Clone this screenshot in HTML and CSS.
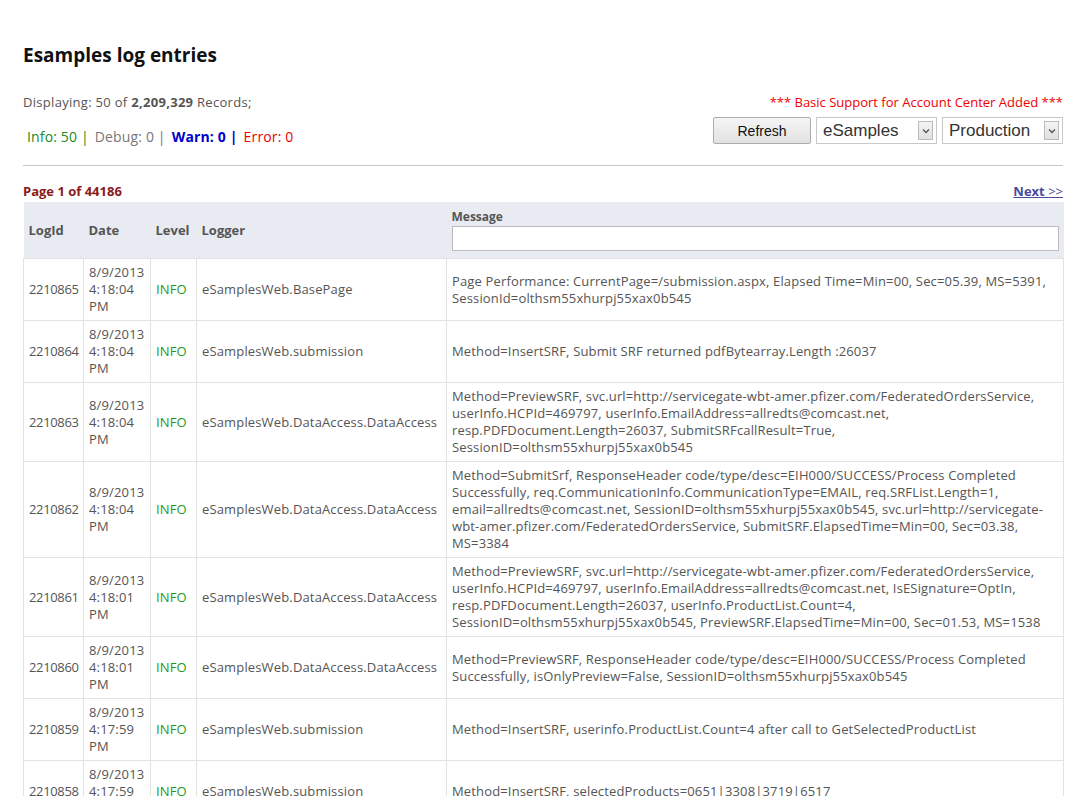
FILE: index.html
```html
<!DOCTYPE html>
<html>
<head>
<meta charset="utf-8">
<title>Esamples log entries</title>
<link rel="stylesheet" href="styles.css">
</head>
<body>
<div class="page">
  <h1 class="title">Esamples log entries</h1>
  <div class="toolbar">
    <div class="stats">
      <div class="displaying">Displaying: 50 of <b>2,209,329</b> Records;</div>
      <div class="counts">
        <span class="c-info">Info: 50 |</span>
        <span class="c-debug">Debug: 0 |</span>
        <span class="c-warn">Warn: 0 |</span>
        <span class="c-error">Error: 0</span>
      </div>
    </div>
    <div class="controls">
      <div class="notice">*** Basic Support for Account Center Added ***</div>
      <div class="buttons">
        <button class="btn">Refresh</button>
        <span class="sel sel-app"><span class="sel-text">eSamples</span><span class="sel-arrow"><svg width="8" height="6" viewBox="0 0 8 6"><path d="M1 1.5 L4 4.5 L7 1.5" fill="none" stroke="#555" stroke-width="1.3"/></svg></span></span>
        <span class="sel sel-env"><span class="sel-text">Production</span><span class="sel-arrow"><svg width="8" height="6" viewBox="0 0 8 6"><path d="M1 1.5 L4 4.5 L7 1.5" fill="none" stroke="#555" stroke-width="1.3"/></svg></span></span>
      </div>
    </div>
  </div>
  <hr class="rule">
  <div class="pager">
    <span class="page-no">Page 1 of 44186</span>
    <a class="next" href="#">Next <span class="gt">&gt;&gt;</span></a>
  </div>
  <table class="log">
    <colgroup>
      <col class="w-id"><col class="w-date"><col class="w-level"><col class="w-logger"><col class="w-msg">
    </colgroup>
    <thead>
      <tr>
        <th>LogId</th>
        <th>Date</th>
        <th>Level</th>
        <th>Logger</th>
        <th class="th-msg"><div class="msg-label">Message</div><input class="msg-filter" type="text"></th>
      </tr>
    </thead>
    <tbody>
      <tr>
        <td class="id">2210865</td><td>8/9/2013 4:18:04 PM</td><td class="lvl">INFO</td><td>eSamplesWeb.BasePage</td>
        <td>Page Performance: CurrentPage=/submission.aspx, Elapsed Time=Min=00, Sec=05.39, MS=5391, SessionId=olthsm55xhurpj55xax0b545</td>
      </tr>
      <tr>
        <td class="id">2210864</td><td>8/9/2013 4:18:04 PM</td><td class="lvl">INFO</td><td>eSamplesWeb.submission</td>
        <td>Method=InsertSRF, Submit SRF returned pdfBytearray.Length :26037</td>
      </tr>
      <tr>
        <td class="id">2210863</td><td>8/9/2013 4:18:04 PM</td><td class="lvl">INFO</td><td>eSamplesWeb.DataAccess.DataAccess</td>
        <td>Method=PreviewSRF, svc.url=http://servicegate-wbt-amer.pfizer.com/FederatedOrdersService, userInfo.HCPId=469797, userInfo.EmailAddress=allredts@comcast.net, resp.PDFDocument.Length=26037, SubmitSRFcallResult=True, SessionID=olthsm55xhurpj55xax0b545</td>
      </tr>
      <tr>
        <td class="id">2210862</td><td>8/9/2013 4:18:04 PM</td><td class="lvl">INFO</td><td>eSamplesWeb.DataAccess.DataAccess</td>
        <td>Method=SubmitSrf, ResponseHeader code/type/desc=EIH000/SUCCESS/Process Completed Successfully, req.CommunicationInfo.CommunicationType=EMAIL, req.SRFList.Length=1, email=allredts@comcast.net, SessionID=olthsm55xhurpj55xax0b545, svc.url=http://servicegate-wbt-amer.pfizer.com/FederatedOrdersService, SubmitSRF.ElapsedTime=Min=00, Sec=03.38, MS=3384</td>
      </tr>
      <tr>
        <td class="id">2210861</td><td>8/9/2013 4:18:01 PM</td><td class="lvl">INFO</td><td>eSamplesWeb.DataAccess.DataAccess</td>
        <td>Method=PreviewSRF, svc.url=http://servicegate-wbt-amer.pfizer.com/FederatedOrdersService, userInfo.HCPId=469797, userInfo.EmailAddress=allredts@comcast.net, IsESignature=OptIn, resp.PDFDocument.Length=26037, userInfo.ProductList.Count=4, SessionID=olthsm55xhurpj55xax0b545, PreviewSRF.ElapsedTime=Min=00, Sec=01.53, MS=1538</td>
      </tr>
      <tr>
        <td class="id">2210860</td><td>8/9/2013 4:18:01 PM</td><td class="lvl">INFO</td><td>eSamplesWeb.DataAccess.DataAccess</td>
        <td>Method=PreviewSRF, ResponseHeader code/type/desc=EIH000/SUCCESS/Process Completed Successfully, isOnlyPreview=False, SessionID=olthsm55xhurpj55xax0b545</td>
      </tr>
      <tr>
        <td class="id">2210859</td><td>8/9/2013 4:17:59 PM</td><td class="lvl">INFO</td><td>eSamplesWeb.submission</td>
        <td>Method=InsertSRF, userinfo.ProductList.Count=4 after call to GetSelectedProductList</td>
      </tr>
      <tr>
        <td class="id">2210858</td><td>8/9/2013 4:17:59 PM</td><td class="lvl">INFO</td><td>eSamplesWeb.submission</td>
        <td>Method=InsertSRF, selectedProducts=0651|3308|3719|6517</td>
      </tr>
    </tbody>
  </table>
</div>
</body>
</html>
```
FILE: styles.css
```css
html, body {
  margin: 0;
  padding: 0;
  background: #fff;
}
body {
  font-family: "Open Sans", "Liberation Sans", sans-serif;
  font-size: 13px;
  letter-spacing: 0.15px;
  color: #555;
}
.page {
  padding: 40px 21px 0 23px;
}
.title {
  margin: 0;
  font-size: 19px;
  line-height: 30px;
  font-weight: bold;
  letter-spacing: 0;
  color: #111;
}
.toolbar {
  display: flex;
  justify-content: space-between;
  align-items: flex-start;
  margin-top: 24px;
}
.displaying {
  font-size: 13px;
  line-height: 16px;
  letter-spacing: 0.3px;
  color: #555;
}
.counts {
  margin-top: 18px;
  padding-left: 4px;
  font-size: 14px;
  line-height: 18px;
  display: flex;
  gap: 6px;
}
.c-info { color: #228b22; }
.c-debug { color: #777; }
.c-warn { color: #0000cc; font-weight: bold; }
.c-error { color: #e00; }
.controls {
  display: flex;
  flex-direction: column;
  align-items: flex-end;
}
.notice {
  font-size: 13px;
  line-height: 16px;
  letter-spacing: 0;
  color: #e00;
}
.buttons {
  margin-top: 7px;
  display: flex;
  gap: 5px;
  align-items: center;
}
.btn {
  width: 98px;
  height: 27px;
  font-family: "Liberation Sans", Arial, sans-serif;
  font-size: 14px;
  letter-spacing: 0;
  color: #111;
  background: linear-gradient(#f5f5f5, #e2e2e2);
  border: 1px solid #adadad;
  border-radius: 2px;
  padding: 0;
}
.sel {
  display: flex;
  align-items: center;
  justify-content: space-between;
  height: 25px;
  border: 1px solid #c8c8c8;
  background: #fff;
  font-family: "Liberation Sans", Arial, sans-serif;
  font-size: 17px;
  letter-spacing: 0;
  color: #333;
  padding: 0 3px 0 6px;
  box-sizing: content-box;
}
.sel-app { width: 110px; }
.sel-env { width: 110px; }
.sel-arrow {
  width: 15px;
  height: 19px;
  border: 1px solid #bbb;
  background: linear-gradient(#f4f4f4, #e0e0e0);
  display: flex;
  align-items: center;
  justify-content: center;
  box-sizing: border-box;
}
.rule {
  margin: 19px 0 0 0;
  border: 0;
  border-top: 1px solid #c8c8c8;
}
.pager {
  display: flex;
  justify-content: space-between;
  align-items: baseline;
  margin-top: 16px;
  line-height: 18px;
  letter-spacing: 0;
}
.page-no {
  color: #8b1a1a;
  font-weight: bold;
}
.next {
  color: #4b4b9b;
  font-weight: bold;
  text-decoration: underline;
}
.next .gt { font-weight: normal; }
.log {
  width: 1040px;
  table-layout: fixed;
  border-collapse: collapse;
  margin-top: 2px;
}
.w-id { width: 60px; }
.w-date { width: 67px; }
.w-level { width: 46px; }
.w-logger { width: 250px; }
.w-msg { width: 617px; }
.log thead tr {
  height: 56px;
}
.log thead th {
  background: #e8ecf2;
  text-align: left;
  font-weight: bold;
  letter-spacing: 0;
  color: #555;
  padding: 0 5px;
  vertical-align: middle;
}
.log thead th.th-msg {
  vertical-align: top;
  padding: 7px 5px 7px 5px;
}
.msg-label {
  font-size: 12px;
  line-height: 16px;
}
.msg-filter {
  display: block;
  width: 100%;
  height: 25px;
  margin: 1px 0 0 0;
  box-sizing: border-box;
  border: 1px solid #bbb;
  background: #fff;
}
.log tbody td {
  border: 1px solid #e3e3e3;
  padding: 5px 5px;
  line-height: 17px;
  vertical-align: middle;
  word-wrap: break-word;
}
.log tbody td.id {
  white-space: nowrap;
  letter-spacing: -0.35px;
}
.log tbody td.lvl {
  color: #1b9b1b;
}
```
